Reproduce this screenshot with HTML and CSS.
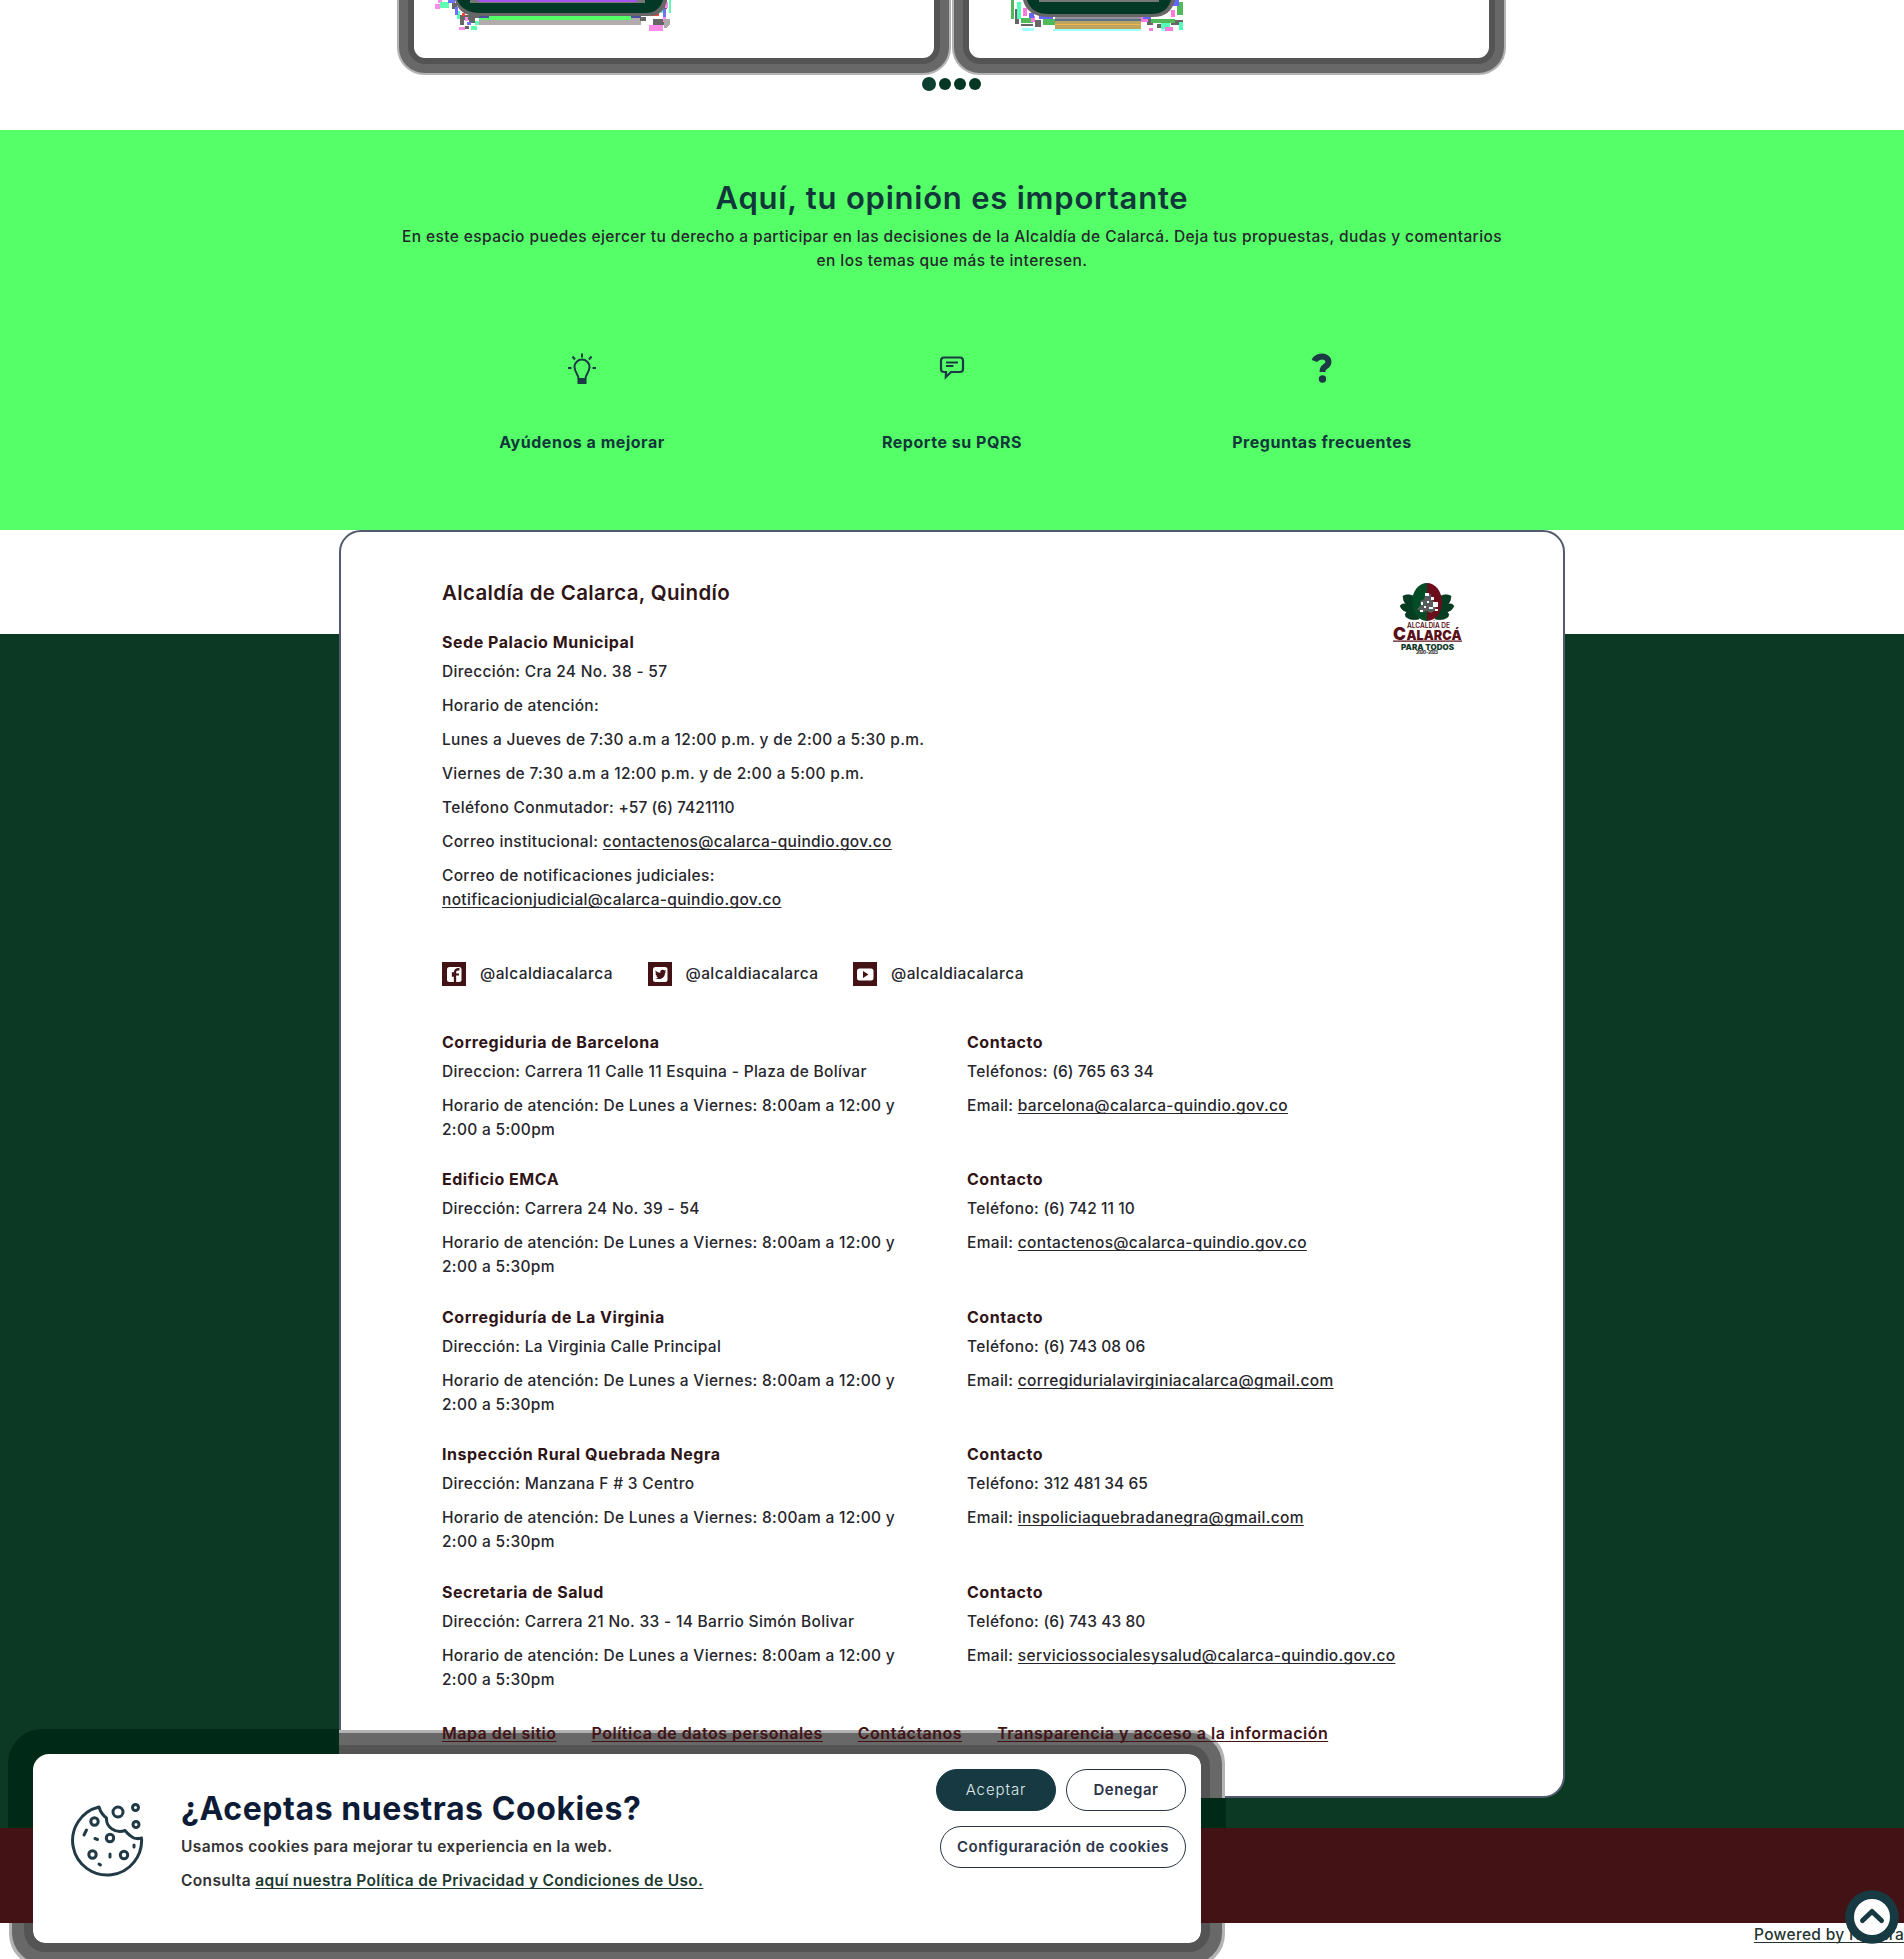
FILE: index.html
```html
<!DOCTYPE html>
<html lang="es">
<head>
<meta charset="utf-8">
<title>Alcaldía de Calarcá, Quindío</title>
<link rel="stylesheet" href="styles.css">
</head>
<body>
<section class="carousel">
  <div class="slides">
    <article class="slide">
      <svg class="glow" width="240" height="34" viewBox="0 0 240 34" shape-rendering="crispEdges">
        <path fill="#b3abae" d="M44 18H206V25H44z"/>
        <path fill="#54ff68" d="M44 16H196V20H44z"/>
        <path fill="#4b4f9e" d="M42 15h12v3H42zM196 15h10v3h-10z"/>
        <path fill="#666" d="M25 15h19v3h-4v5h-6v-3h-5v5h-4zM218 19h12v6h-12zM30 26h4v3h-4zM205 17h6v4h-6zM17 3h5v6h-5zM229 0h3v9h-3z"/>
        <path fill="#ff8ceb" d="M0 4h5v5H0zM24 27h6v3h-6zM214 25h14v6h-14zM30 17h3v4h-3zM230 2h3v6h-3zM3 0h4v3H3zM228 17h3v5h-3z"/>
        <path fill="#5dffb0" d="M5 2h9v6H5zM36 26h6v4h-6zM22 11h3v8h-3zM226 4h3v9h-3zM40 21h4v4h-4zM234 0h2v13h-2z"/>
        <path fill="#6c72ff" d="M13 0h7v3h-7zM20 7h3v8h-3zM228 9h3v8h-3zM32 22h4v3h-4z"/>
        <path fill="#f0443e" d="M216 13h8v3h-8zM27 13h3v3h-3z"/>
        <path fill="#b0aaad" d="M229 19h6v5l-3 4h-3z"/>
        <path shape-rendering="auto" fill="#666" d="M20 0H232Q229 16 214 16H42Q24 16 20 0z"/>
        <path shape-rendering="auto" fill="#023826" d="M22 0H228Q224 13 210 13H46Q28 13 22 0z"/>
        <path fill="#777" d="M35 0H210V3H35z"/><path fill="#a354ea" d="M43 0H202V2H43z"/>
      </svg>
    </article>
    <article class="slide">
      <svg class="glow glow-b" width="176" height="34" viewBox="0 0 176 34" shape-rendering="crispEdges">
        <path fill="#9a8f9c" d="M44 16H132V19H44z"/><path fill="#54718a" d="M44 19H130V21H44z"/>
        <path fill="#bfa45c" d="M44 21H130V29H44z"/><path fill="#efb45a" d="M44 24H130V25H44z"/>
        <path fill="#a0ffff" d="M11 28h12v3H11zM42 29h88v2H42zM150 28h8v3h-8z"/>
        <path fill="#666" d="M4 9h4v15H4zM10 24h12v2H10zM24 20h6v7h-6zM136 19h6v6h-6zM146 24h8v4h-8zM160 20h12v5h-12z"/>
        <path fill="#50b95a" d="M0 0h3v19H0zM10 18h12v5H10zM32 19h12v6H32zM140 19h12v4h-12zM152 19h12v4h-12zM166 2h6v13h-6z"/>
        <path fill="#55ffb8" d="M6 2h4v17H6zM150 23h9v6h-9zM168 22h4v8h-4z"/>
        <path fill="#ff78dc" d="M12 8h4v8h-4zM20 16h4v6h-4zM130 17h7v5h-7zM138 28h4v3h-4zM154 27h8v4h-8zM160 10h4v7h-4z"/>
        <path fill="#6464ff" d="M18 13h5v5h-5zM132 15h8v4h-8zM160 0h8v6h-8zM28 16h14v3H28z"/>
        <path shape-rendering="auto" fill="#666" d="M12 0H164Q160 17 142 17H38Q16 17 12 0z"/>
        <path shape-rendering="auto" fill="#023826" d="M16 0H160Q156 14 140 14H38Q20 14 16 0z"/>
        <path fill="#777" d="M28 0H148V2H28z"/>
      </svg>
    </article>
  </div>
  <div class="dots"><i class="dot dot-on"></i><i class="dot"></i><i class="dot"></i><i class="dot"></i></div>
</section>

<section class="opinion">
  <h2 class="opinion-title">Aquí, tu opinión es importante</h2>
  <p class="opinion-text">En este espacio puedes ejercer tu derecho a participar en las decisiones de la Alcaldía de Calarcá. Deja tus propuestas, dudas y comentarios<br>en los temas que más te interesen.</p>
  <div class="options">
    <div class="option">
      <svg width="28" height="34" viewBox="0 0 28 34" fill="none" stroke="#1b3a44" stroke-width="2"><path d="M10.5 26.5c0-4-4-6.500-4-11.500a7.500 7.500 0 0 1 15 0c0 5-4 7.500-4 11.500M14 1.500v4M4.500 4.500l2.500 3M23.500 4.500L21 7.500M0 16h3.500M24.500 16H28"/><path d="M10.500 27h7v4h-7z" fill="#1b3a44"/></svg>
      <h3>Ayúdenos a mejorar</h3>
    </div>
    <div class="option">
      <svg width="28" height="34" viewBox="0 0 28 34" fill="none" stroke="#1b3a44" stroke-width="2.200"><path d="M6 5.500h16a3 3 0 0 1 3 3v8.500a3 3 0 0 1-3 3h-9L7.800 25 8 20H6a3 3 0 0 1-3-3V8.500a3 3 0 0 1 3-3zM8 10.500h12M8 14h7.500"/></svg>
      <h3>Reporte su PQRS</h3>
    </div>
    <div class="option">
      <svg width="28" height="34" viewBox="0 0 28 34" fill="none" stroke="#1b3a44"><path stroke-width="6" stroke-linejoin="round" d="M6.500 9C8 5 14 3.500 18 5.600c3.500 2.200 3 6.200 0 8.400-2.500 1.800-3.500 2.500-3.500 6"/><circle cx="14.500" cy="27" r="3.700" fill="#1b3a44" stroke="none"/></svg>
      <h3>Preguntas frecuentes</h3>
    </div>
  </div>
</section>

<footer class="footer">
  <div class="card">
    <div class="card-head">
      <div class="main-office">
        <h2 class="card-title">Alcaldía de Calarca, Quindío</h2>
        <h3>Sede Palacio Municipal</h3>
        <p>Dirección: Cra 24 No. 38 - 57</p>
        <p>Horario de atención:</p>
        <p>Lunes a Jueves de 7:30 a.m a 12:00 p.m. y de 2:00 a 5:30 p.m.</p>
        <p>Viernes de 7:30 a.m a 12:00 p.m. y de 2:00 a 5:00 p.m.</p>
        <p>Teléfono Conmutador: <span class="digits">+57 (6) 7421110</span></p>
        <p>Correo institucional: <a href="#">contactenos@calarca-quindio.gov.co</a></p>
        <p>Correo de notificaciones judiciales:<br><a href="#">notificacionjudicial@calarca-quindio.gov.co</a></p>
      </div>
      <svg class="logo" width="70" height="74" viewBox="0 0 70 74">
        <g fill="#063d22" stroke="#052c19" stroke-width=".6">
          <path d="M22 14Q16 10 10 13Q10 18 13 21Q9 20 7 23Q9 28 14 29Q11 31 13 34Q18 38 26 36z"/>
          <path d="M46 14Q52 10 58 13Q58 18 55 21Q59 20 61 23Q59 28 54 29Q57 31 55 34Q50 38 42 36z"/>
        </g>
        <path fill="#024c26" d="M34 0a15 19 0 0 0 0 38z"/><path fill="#6b0d1b" d="M34 0a15 19 0 0 1 0 38z"/>
        <path fill="#555c59" d="M33 10l5 1 1 6 4 3v7l-5 3-5-2-4 2-5-4 4-4-1-4 4-2z"/>
        <path fill="#fff" d="M32 10h4v3h-4zM38 14h3v3h-3zM40 19h5v5h-5zM36 24h4v2h-4zM28 19h2v3h-2zM27 27h3v2h-3zM34 18h2v2h-2zM42 26h3v2h-3zM31 23h2v2h-2z"/>
        <path fill="#5a1019" d="M0 57.500h69v1.300H0z"/>
        <text class="logo-a" x="14" y="45" textLength="43" lengthAdjust="spacingAndGlyphs">ALCALDÍA DE</text>
        <text class="logo-b" x="0" y="57" textLength="13" lengthAdjust="spacingAndGlyphs">C</text>
        <text class="logo-c" x="13.500" y="57" textLength="55" lengthAdjust="spacingAndGlyphs">ALARCÁ</text>
        <text class="logo-d" x="8" y="66.500" textLength="53" lengthAdjust="spacingAndGlyphs">PARA TODOS</text>
        <text class="logo-e" x="23" y="71" textLength="22">2020 - 2023</text>
      </svg>
    </div>
    <div class="social">
      <span class="social-item"><svg width="24" height="24" viewBox="0 0 24 24"><path fill="#421215" d="M0 0h24v24H0z"/><rect x="5" y="5" width="14.500" height="15" rx="2.500" fill="#fff"/><path d="M13 20v-6.500h-2v-2h2c-.3-3.500 1.500-4.500 4.500-4.200" fill="none" stroke="#421215" stroke-width="2.300"/><path stroke="#421215" stroke-width="2" d="M11 12.500h6"/></svg>@alcaldiacalarca</span>
      <span class="social-item"><svg width="24" height="24" viewBox="0 0 24 24"><path fill="#421215" d="M0 0h24v24H0z"/><rect x="5" y="5" width="14.500" height="15" rx="2.500" fill="#fff"/><path fill="#421215" d="M7.500 8.500q2 2.300 4.800 2.300-.3-3 2.300-3 1.200 0 1.800.7l1.600-.5-1 1.700 1 0-1 1.200c0 4-3.500 6.500-7 6-1.200 0-2-.3-2.800-.8q1.800 0 2.900-.9-1.500-.2-2-1.500h.9Q7.500 13 7.400 11.300l.9.200q-1.300-1.300-.8-3z"/></svg>@alcaldiacalarca</span>
      <span class="social-item"><svg width="24" height="24" viewBox="0 0 24 24"><path fill="#421215" d="M0 0h24v24H0z"/><rect x="4" y="6.500" width="16.500" height="12" rx="2.500" fill="#fff"/><path fill="#421215" d="M10 9l5.500 3.500L10 16z"/></svg>@alcaldiacalarca</span>
    </div>
    <div class="offices">
      <div class="office"><h3>Corregiduria de Barcelona</h3><p>Direccion: Carrera 11 Calle 11 Esquina - Plaza de Bolívar</p><p>Horario de atención: De Lunes a Viernes: 8:00am a 12:00 y<br>2:00 a 5:00pm</p></div>
      <div class="office"><h3>Contacto</h3><p>Teléfonos: <span class="digits">(6) 765 63 34</span></p><p>Email: <a href="#">barcelona@calarca-quindio.gov.co</a></p></div>
      <div class="office"><h3>Edificio EMCA</h3><p>Dirección: Carrera 24 No. 39 - 54</p><p>Horario de atención: De Lunes a Viernes: 8:00am a 12:00 y<br>2:00 a 5:30pm</p></div>
      <div class="office"><h3>Contacto</h3><p>Teléfono: <span class="digits">(6) 742 11 10</span></p><p>Email: <a href="#">contactenos@calarca-quindio.gov.co</a></p></div>
      <div class="office"><h3>Corregiduría de La Virginia</h3><p>Dirección: La Virginia Calle Principal</p><p>Horario de atención: De Lunes a Viernes: 8:00am a 12:00 y<br>2:00 a 5:30pm</p></div>
      <div class="office"><h3>Contacto</h3><p>Teléfono: <span class="digits">(6) 743 08 06</span></p><p>Email: <a href="#">corregidurialavirginiacalarca@gmail.com</a></p></div>
      <div class="office"><h3>Inspección Rural Quebrada Negra</h3><p>Dirección: Manzana F # 3 Centro</p><p>Horario de atención: De Lunes a Viernes: 8:00am a 12:00 y<br>2:00 a 5:30pm</p></div>
      <div class="office"><h3>Contacto</h3><p>Teléfono: <span class="digits">312 481 34 65</span></p><p>Email: <a href="#">inspoliciaquebradanegra@gmail.com</a></p></div>
      <div class="office"><h3>Secretaria de Salud</h3><p>Dirección: Carrera 21 No. 33 - 14 Barrio Simón Bolivar</p><p>Horario de atención: De Lunes a Viernes: 8:00am a 12:00 y<br>2:00 a 5:30pm</p></div>
      <div class="office"><h3>Contacto</h3><p>Teléfono: <span class="digits">(6) 743 43 80</span></p><p>Email: <a href="#">serviciossocialesysalud@calarca-quindio.gov.co</a></p></div>
    </div>
    <nav class="links"><a href="#">Mapa del sitio</a><a href="#">Política de datos personales</a><a href="#">Contáctanos</a><a href="#">Transparencia y acceso a la información</a></nav>
  </div>
</footer>
<div class="strip"></div>
<div class="powered"><a href="#">Powered by Nexura</a></div>

<div class="shade"><i class="shade-green-left"></i><i class="shade-green-right"></i><i class="shade-maroon"></i></div>
<aside class="cookies">
  <svg class="cookie-icon" width="74" height="76" viewBox="0 0 74 76" fill="none" stroke="#213a45" stroke-width="3" stroke-linejoin="round" stroke-linecap="round">
    <path d="M29 5A34.500 34.500 0 1 0 71.500 36Q65 38 60 33.500 57 31 55 28.500 48 31 42 27 36 23 36.500 16 31 12 29 5z"/>
    <circle cx="48" cy="10" r="5"/><circle cx="65.500" cy="5.500" r="3"/><circle cx="66" cy="22.500" r="3"/><circle cx="24.500" cy="19.500" r="3.700"/><circle cx="40" cy="36" r="3.700"/><circle cx="22.500" cy="52.500" r="3.700"/><circle cx="54" cy="53" r="3.700"/>
    <path d="M16.500 28l-2.500 5M25 36.500l2.500 1M64 43v2M40 52v3M29 62l1.500 1"/>
  </svg>
  <div class="cookie-copy">
    <h2>¿Aceptas nuestras Cookies?</h2>
    <p>Usamos cookies para mejorar tu experiencia en la web.</p>
    <p>Consulta <a href="#">aquí nuestra Política de Privacidad y Condiciones de Uso.</a></p>
  </div>
  <div class="cookie-actions">
    <button class="btn btn-primary">Aceptar</button><button class="btn">Denegar</button>
    <button class="btn btn-wide">Configuraración de cookies</button>
  </div>
</aside>
<button class="to-top" aria-label="Subir"><svg width="54" height="54" viewBox="0 0 54 54"><circle cx="27" cy="27" r="26.800" fill="#173a42"/><circle cx="27" cy="27" r="18" fill="#fff"/><path d="M17.500 30.500L27 21.500l9.500 9" fill="none" stroke="#173a42" stroke-width="5" stroke-linecap="round" stroke-linejoin="round"/></svg></button>
</body>
</html>
```
FILE: styles.css
```css
* { box-sizing: border-box; }
body {
  position: relative;
  margin: 0;
  height: 1959px;
  overflow: hidden;
  background: #fff;
  color: #26262c;
  font: 500 15.5px/24px Inter, "Open Sans", sans-serif;
  letter-spacing: .32px;
}
h2, h3, p { margin: 0; }
a { color: inherit; text-decoration: underline; text-decoration-thickness: 1px; text-underline-offset: 2px; text-decoration-skip-ink: none; }
button { font: inherit; letter-spacing: inherit; padding: 0; }

.carousel { height: 130px; }
.slides { display: flex; justify-content: center; gap: 35px; margin-right: 1px; }
.slide {
  width: 520px;
  height: 58px;
  border-radius: 0 0 11px 11px;
  background: #fff;
  box-shadow: 0 0 0 6px #545454, 0 0 0 15px #686868, 0 0 0 17px #b3b3b3;
}
.glow { display: block; margin-left: 21px; }
.glow-b { margin-left: 42px; }
.dots { display: flex; align-items: center; justify-content: center; gap: 3px; height: 16px; margin: 18px 2px 0 0; }
.dot { width: 12px; height: 12px; border-radius: 50%; background: #063624; }
.dot-on { width: 14px; height: 14px; background: #0b4030; }

.opinion { height: 400px; padding-top: 50px; background: #54ff68; text-align: center; }
.opinion-title { color: #12373a; font-size: 31px; font-weight: 600; line-height: 36px; letter-spacing: .78px; }
.opinion-text { margin-top: 9px; letter-spacing: .41px; }
.options { display: grid; grid-template-columns: repeat(3, 370px); justify-content: center; margin-top: 79px; color: #12373a; }
.option { display: flex; flex-direction: column; align-items: center; gap: 43px; }
.option h3, .card h3 { font-size: 16px; font-weight: 700; letter-spacing: .53px; }
.option h3 { line-height: 26px; }

.footer { height: 1298px; background: linear-gradient(#fff 104px, #0c3924 104px); }
.card {
  width: 1226px;
  height: 1268px;
  margin: 0 auto;
  padding: 48px 99px 0 101px;
  border: 2px solid #535a70;
  border-radius: 22px;
  background: #fff;
}
.card h3, .card-title { color: #2f1517; }
.card-head { display: flex; justify-content: space-between; }
.card-title { margin-bottom: 24px; font-size: 20.5px; line-height: 26px; font-weight: 600; letter-spacing: .34px; }
.card h3 { margin-bottom: 6px; line-height: 24px; }
.card p + p { margin-top: 10px; }
.digits { letter-spacing: .05px; }
.logo { margin-top: 3px; margin-right: 1px; overflow: visible; }
.logo text { font-family: Inter, sans-serif; fill: #5a1019; letter-spacing: 0; }
.logo .logo-a { font-size: 7px; line-height: 7px; font-weight: 600; }
.logo .logo-b { font-size: 18px; font-weight: 900; }
.logo .logo-c { font-size: 13px; font-weight: 900; }
.logo .logo-d { font-size: 7.500px; font-weight: 900; fill: #123a2a; }
.logo .logo-e { font-size: 4.500px; font-weight: 800; fill: #333; }
.social { display: flex; gap: 36px; margin-top: 49px; letter-spacing: .42px; }
.social-item { display: flex; align-items: center; gap: 14px; width: 169.500px; white-space: nowrap; line-height: 26px; }
.social-item svg { flex: none; }
.offices { display: grid; grid-template-columns: 525px 1fr; grid-auto-rows: 137.400px; margin-top: 43px; white-space: nowrap; }
.links { position: relative; z-index: 2; display: flex; gap: 35px; margin-top: 4px; color: #421215; font-size: 16px; font-weight: 600; letter-spacing: .5px; white-space: nowrap; }
.strip { height: 95px; background: #421215; }
.powered { height: 24px; margin-left: 1754px; white-space: nowrap; color: #24352f; }

.shade {
  position: absolute;
  z-index: 1;
  left: 33px;
  top: 1754px;
  width: 1168px;
  height: 189px;
  border-radius: 12px;
  box-shadow: 0 0 0 9px #545454, 0 0 0 21px #686868, 0 0 0 24px #b3b3b3;
}
.shade i { position: absolute; }
.shade-green-left { left: -25px; top: -25px; width: 331px; height: 99px; border-radius: 34px 0 0 0; background: #002a18; }
.shade-green-right { right: -25px; top: 44px; width: 25px; height: 30px; background: #002a18; }
.shade-maroon { left: -25px; right: -25px; top: 74px; height: 95px; background: #421215; }

.cookies {
  position: absolute;
  z-index: 3;
  left: 33px;
  top: 1754px;
  display: flex;
  width: 1168px;
  height: 189px;
  padding: 0 15px 0 37px;
  border-radius: 16px;
  background: #fff;
}
.cookie-icon { flex: none; margin-top: 48px; }
.cookie-copy { flex: 1; margin-left: 37px; padding-top: 36px; font-size: 15.5px; font-weight: 600; letter-spacing: .36px; white-space: nowrap; }
.cookie-copy h2 { margin-bottom: 8px; color: #0d1b36; font-size: 32px; line-height: 37px; font-weight: 700; letter-spacing: .58px; }
.cookie-copy p { line-height: 24px; color: #333; }
.cookie-copy p + p { margin-top: 10px; }
.cookie-copy a { color: #1d3a30; letter-spacing: .32px; }
.cookie-actions { display: flex; flex-wrap: wrap; justify-content: flex-end; align-content: flex-start; gap: 15px 10px; width: 251px; padding-top: 15px; }
.btn { width: 120px; height: 42px; border: 1px solid #2a3344; border-radius: 21px; background: #fff; color: #2c3448; font-size: 15px; font-weight: 600; letter-spacing: .46px; }
.btn-primary { border-color: #173a42; background: #173a42; color: #dfe8ea; font-weight: 300; letter-spacing: .9px; }
.btn-wide { width: 246px; }
.to-top { position: absolute; z-index: 4; left: 1845px; top: 1890px; border: 0; background: none; line-height: 0; }
```
